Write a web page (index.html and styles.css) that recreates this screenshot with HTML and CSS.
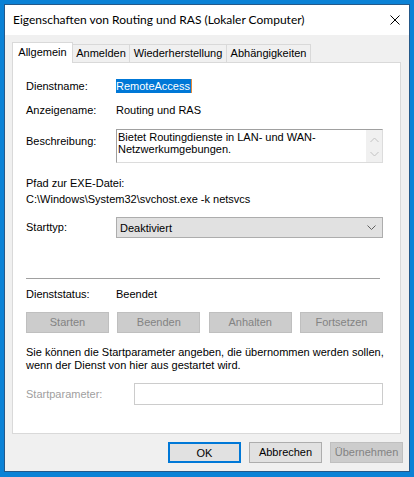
FILE: index.html
```html
<!DOCTYPE html>
<html lang="de">
<head>
  <meta charset="UTF-8">
  <title>Eigenschaften von Routing und RAS</title>
  <link rel="stylesheet" href="styles.css">
</head>
<body>
  <div class="window">
    <!-- Title bar -->
    <div class="titlebar">
      <span class="title">Eigenschaften von Routing und RAS (Lokaler Computer)</span>
      <svg class="close" width="10" height="10" viewBox="0 0 10 10">
        <path d="M0.5 0.5 L9.5 9.5 M9.5 0.5 L0.5 9.5" stroke="#000" stroke-width="1" fill="none"/>
      </svg>
    </div>

    <div class="body">
      <!-- Tabs -->
      <div class="tabs">
        <div class="tab active">Allgemein</div>
        <div class="tab tab-anmelden">Anmelden</div>
        <div class="tab tab-wieder">Wiederherstellung</div>
        <div class="tab tab-abh">Abhängigkeiten</div>
      </div>

      <div class="panel">
        <div class="row">
          <span class="label">Dienstname:</span>
          <span class="value"><span class="selected">RemoteAccess</span></span>
        </div>
        <div class="row row-gap">
          <span class="label">Anzeigename:</span>
          <span class="value">Routing und RAS</span>
        </div>
        <div class="row row-desc">
          <span class="label label-desc">Beschreibung:</span>
          <div class="textbox">
            <div class="textbox-text">Bietet Routingdienste in LAN- und WAN-<br>Netzwerkumgebungen.</div>
            <div class="scrollbar">
              <svg width="9" height="6" viewBox="0 0 9 6"><path d="M0.5 5 L4.5 1 L8.5 5" stroke="#c2c2c2" fill="none"/></svg>
              <svg width="9" height="6" viewBox="0 0 9 6"><path d="M0.5 1 L4.5 5 L8.5 1" stroke="#c2c2c2" fill="none"/></svg>
            </div>
          </div>
        </div>

        <div class="path-label">Pfad zur EXE-Datei:</div>
        <div class="path">C:\Windows\System32\svchost.exe -k netsvcs</div>

        <div class="row row-start">
          <span class="label label-start">Starttyp:</span>
          <div class="combo">
            <span>Deaktiviert</span>
            <svg width="9" height="5" viewBox="0 0 9 5"><path d="M0.5 0.5 L4.5 4.5 L8.5 0.5" stroke="#606060" fill="none"/></svg>
          </div>
        </div>

        <div class="separator"></div>

        <div class="row row-status">
          <span class="label">Dienststatus:</span>
          <span class="value">Beendet</span>
        </div>

        <div class="service-buttons">
          <button class="btn" disabled>Starten</button>
          <button class="btn" disabled>Beenden</button>
          <button class="btn" disabled>Anhalten</button>
          <button class="btn" disabled>Fortsetzen</button>
        </div>

        <p class="hint">Sie können die Startparameter angeben, die übernommen werden sollen,<br>wenn der Dienst von hier aus gestartet wird.</p>

        <div class="row row-param">
          <span class="label label-param">Startparameter:</span>
          <div class="param-input"></div>
        </div>
      </div>

      <!-- Dialog buttons -->
      <div class="footer">
        <button class="btn btn-default">OK</button>
        <button class="btn btn-normal">Abbrechen</button>
        <button class="btn" disabled>Übernehmen</button>
      </div>
    </div>
  </div>
</body>
</html>
```

FILE: styles.css
```css
* {
  margin: 0;
  padding: 0;
  box-sizing: border-box;
}

body {
  font-family: "Liberation Sans", Arial, sans-serif;
  font-size: 11px;
  color: #000;
  background: #0b82d6;
  padding: 4px;
  width: 414px;
  height: 477px;
  overflow: hidden;
}

.window {
  width: 406px;
  height: 468px;
  border: 1px solid #24598a;
  background: #f0f0f0;
  display: flex;
  flex-direction: column;
}

.titlebar {
  height: 30px;
  background: #fff;
  display: flex;
  align-items: center;
  justify-content: space-between;
  padding: 0 9px 0 8px;
}

.title {
  font-family: Lato, "Liberation Sans", sans-serif;
  font-size: 12px;
  line-height: 16px;
}

.close {
  display: block;
}

.body {
  padding: 7px 6px 0 7px;
}

/* Tabs */
.tabs {
  display: flex;
  align-items: flex-end;
  height: 20px;
}

.tab {
  height: 18px;
  line-height: 17px;
  border: 1px solid #d9d9d9;
  border-bottom: none;
  background: #f0f0f0;
  text-align: center;
  white-space: nowrap;
  margin-left: -1px;
}

.tab.active {
  position: relative;
  z-index: 1;
  width: 61px;
  height: 21px;
  line-height: 19px;
  margin-left: 0;
  margin-bottom: -1px;
  background: #fff;
}

.tab-anmelden { width: 58px; }
.tab-wieder { width: 98px; }
.tab-abh { width: 85px; }

/* Tab page */
.panel {
  width: 389px;
  height: 372px;
  border: 1px solid #d9d9d9;
  background: #fff;
  padding: 15px 0 0 13px;
}

.row {
  display: grid;
  grid-template-columns: 90px 1fr;
  align-items: start;
  line-height: 16px;
}

.row-gap { margin-top: 8px; }

.selected {
  display: inline-block;
  background: #0078d7;
  color: #fff;
  line-height: 14px;
  margin-top: 1px;
  padding-right: 1px;
  border-right: 1px solid #e08a3c;
}

.row-desc { margin-top: 11px; }
.label-desc { margin-top: 4px; }

.textbox {
  width: 267px;
  height: 34px;
  border: 1px solid #dcdcdc;
  border-top-color: #a0a0a0;
  border-left-color: #a0a0a0;
  display: flex;
  justify-content: space-between;
}

.textbox-text {
  padding: 1px 0 0 1px;
  line-height: 12px;
  white-space: nowrap;
}

.scrollbar {
  width: 16px;
  background: #f0f0f0;
  display: flex;
  flex-direction: column;
  align-items: center;
  justify-content: space-between;
  padding: 7px 0 5px;
}

.scrollbar svg {
  display: block;
}

.path-label {
  margin-top: 12px;
  line-height: 16px;
}

.path {
  line-height: 16px;
}

.row-start { margin-top: 10px; }
.label-start { margin-top: 2px; }

.combo {
  width: 267px;
  height: 21px;
  background: #e1e1e1;
  border: 1px solid #adadad;
  display: flex;
  align-items: center;
  justify-content: space-between;
  padding: 0 6px 0 3px;
}

.combo svg {
  display: block;
}

.separator {
  width: 354px;
  height: 1px;
  background: #a0a0a0;
  margin-top: 40px;
}

.row-status { margin-top: 7px; }

.service-buttons {
  width: 357px;
  margin-top: 10px;
  display: flex;
  justify-content: space-between;
}

.btn {
  font-family: inherit;
  font-size: 11px;
  width: 83px;
  height: 21px;
  line-height: 19px;
  border: 1px solid #adadad;
  background: #e1e1e1;
  color: #000;
}

.btn:disabled {
  background: #cccccc;
  border-color: #bfbfbf;
  color: #838383;
}

.hint {
  margin-top: 13px;
  line-height: 13px;
  white-space: nowrap;
}

.row-param {
  grid-template-columns: 108px 1fr;
  margin-top: 11px;
}

.label-param {
  margin-top: 3px;
  color: #a0a0a0;
}

.param-input {
  width: 249px;
  height: 22px;
  border: 1px solid #cccccc;
}

/* Dialog buttons */
.footer {
  display: flex;
  justify-content: flex-end;
  gap: 8px;
  margin-top: 8px;
}

.footer .btn {
  width: 73px;
}

.btn-default {
  border: 2px solid #0078d7;
}
```
